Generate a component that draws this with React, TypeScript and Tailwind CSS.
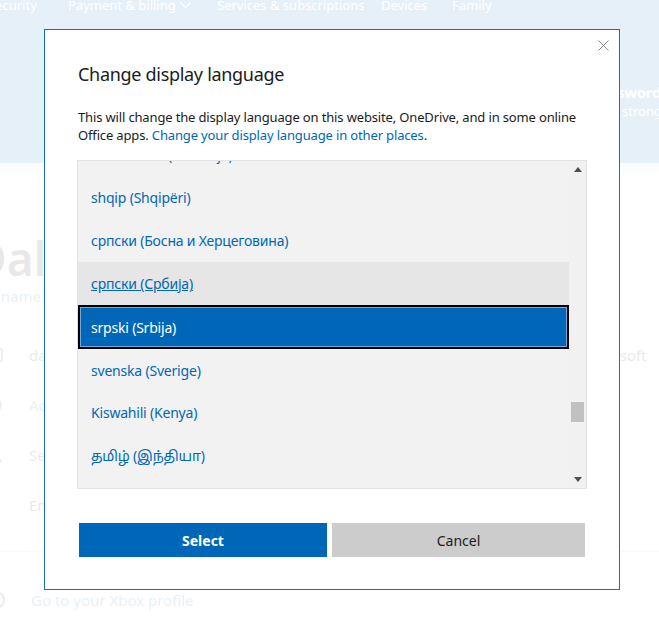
import React from "react";

const FONT = "font-['Noto_Sans','Noto_Sans_Tamil','DejaVu_Sans',sans-serif]";

function ChevronDown() {
  return (
    <svg width="11" height="7" viewBox="0 0 11 7" className="ml-[4px]" fill="none">
      <path d="M0.5 0.5 L5.5 5.5 L10.5 0.5" stroke="white" strokeWidth="1.1" />
    </svg>
  );
}

function RowIcon({ kind }: { kind: number }) {
  return (
    <svg width="20" height="20" viewBox="0 0 20 20" fill="none" className="shrink-0">
      {kind === 0 && <rect x="2" y="4" width="16" height="12" rx="1" stroke="#1b1b1b" strokeWidth="1.3" />}
      {kind === 1 && <circle cx="10" cy="10" r="7" stroke="#1b1b1b" strokeWidth="1.3" />}
      {kind === 2 && <path d="M3 17 L10 3 L17 17" stroke="#1b1b1b" strokeWidth="1.3" />}
      {kind === 3 && <path d="M4 6 H16 M4 10 H16 M4 14 H16" stroke="#1b1b1b" strokeWidth="1.3" />}
      {kind === 4 && <circle cx="10" cy="10" r="8" stroke="#1b1b1b" strokeWidth="1.6" />}
    </svg>
  );
}

function Background() {
  return (
    <div className="flex flex-col">
      <header className="h-[163px] bg-[#0067b8] flex flex-col">
        <nav className="flex -mt-[6px] h-[22px] items-center text-[13px] leading-[22px] text-white whitespace-nowrap -ml-[12px]">
          <span className="w-[80px] shrink-0">Security</span>
          <span className="w-[149px] shrink-0 flex items-center">
            Payment &amp; billing
            <ChevronDown />
          </span>
          <span className="w-[164px] shrink-0">Services &amp; subscriptions</span>
          <span className="w-[71px] shrink-0">Devices</span>
          <span className="shrink-0">Family</span>
        </nav>
        <div className="flex mt-[66px] whitespace-nowrap text-white">
          <div className="w-[592px] shrink-0" />
          <div className="flex flex-col">
            <span className="text-[15px] leading-[20px] font-bold tracking-[-0.3px]">Password</span>
            <span className="text-[13px] leading-[18px] pl-[30px]">stronger password</span>
          </div>
        </div>
      </header>
      <div className="h-[16px] bg-gradient-to-b from-[#c9def2] to-white" />
      <div className="flex flex-col -ml-[22px] whitespace-nowrap text-[#1b1b1b]">
        <div className="mt-[51px] -ml-[5px] text-[46px] leading-[56px] font-semibold">Dalibor Smith</div>
        <div className="-ml-[8px] text-[15px] leading-[20px] text-[#0067b8]">Edit name</div>
        <div className="mt-[24px] flex flex-col text-[15px]">
          {[
            { t: "dalibor.smith@outlook.com", blue: false, right: "Microsoft" },
            { t: "Account info", blue: true },
            { t: "Security settings", blue: false },
            { t: "English (United States)", blue: false },
          ].map((r, i) => (
            <div key={i} className="h-[50px] flex items-center pl-[6px]">
              <div className="w-[612px] flex items-center gap-[25px] shrink-0">
                <RowIcon kind={i} />
                <span className={r.blue ? "text-[#0067b8]" : ""}>{r.t}</span>
              </div>
              {r.right && <span className="-ml-[16px]">{r.right}</span>}
            </div>
          ))}
        </div>
      </div>
      <div className="mt-[21px] border-t border-[#1b1b1b]/20 pt-[38px] flex items-center gap-[25px] -ml-[14px] text-[15px] leading-[20px] text-[#0067b8] whitespace-nowrap">
        <RowIcon kind={4} />
        <span>Go to your Xbox profile</span>
      </div>
    </div>
  );
}

const items = [
  "slovenščina (Slovenija)",
  "shqip (Shqipëri)",
  "српски (Босна и Херцеговина)",
  "српски (Србија)",
  "srpski (Srbija)",
  "svenska (Sverige)",
  "Kiswahili (Kenya)",
  "தமிழ் (இந்தியா)",
  "తెలుగు (భారతదేశం)",
];

function LanguageList() {
  return (
    <div className="mt-[16px] h-[329px] border border-[#e3e3e3] bg-[#f2f2f2] flex overflow-hidden">
      <div className="flex-1 overflow-hidden">
        <div className="-mt-[28px] flex flex-col">
          {items.map((it, i) => {
            if (i === 4) {
              return (
                <div
                  key={i}
                  className="h-[44px] flex items-center pl-[11px] bg-[#0067b8] border-2 border-black shadow-[inset_0_0_0_1px_#6fa8dc] text-white text-[14px] tracking-[-0.2px]"
                >
                  {it}
                </div>
              );
            }
            const hover = i === 3;
            return (
              <div
                key={i}
                className={`${i === 5 ? "h-[42px]" : "h-[43px]"} flex items-center pl-[13px] text-[14px] tracking-[-0.2px] text-[#0067b8] ${hover ? "bg-[#e6e6e6] underline" : ""}`}
              >
                {it}
              </div>
            );
          })}
        </div>
      </div>
      <div className="w-[17px] flex flex-col bg-[#f1f1f1]">
        <div className="h-[17px] flex items-center justify-center">
          <svg width="8" height="5" viewBox="0 0 8 5">
            <path d="M0 5 L4 0 L8 5 Z" fill="#505050" />
          </svg>
        </div>
        <div className="flex-1 flex flex-col">
          <div className="mt-[224px] h-[20px] mx-[2px] bg-[#c1c1c1]" />
        </div>
        <div className="h-[17px] flex items-center justify-center">
          <svg width="8" height="5" viewBox="0 0 8 5">
            <path d="M0 0 L8 0 L4 5 Z" fill="#505050" />
          </svg>
        </div>
      </div>
    </div>
  );
}

export default function App() {
  return (
    <div className={`relative w-[659px] h-[625px] overflow-hidden bg-white ${FONT}`}>
      <Background />
      <div className="absolute inset-0 bg-white/90" />
      <div className="absolute left-[44px] top-[29px] w-[576px] h-[561px] bg-white border border-[#1a6ec0] px-[32px] pt-[30px] flex flex-col">
        <button className="absolute top-[10px] right-[10px] w-[11px] h-[11px]" aria-label="Close">
          <svg width="11" height="11" viewBox="0 0 11 11">
            <path d="M0.5 0.5 L10.5 10.5 M10.5 0.5 L0.5 10.5" stroke="#8a8a8a" strokeWidth="1" />
          </svg>
        </button>
        <h2 className="text-[18px] leading-[28px] tracking-[-0.3px] text-[#1b1b1b] pl-[1px]">Change display language</h2>
        <p className="mt-[20px] text-[13px] leading-[18px] tracking-[-0.15px] text-[#1b1b1b] pl-[1px]">
          This will change the display language on this website, OneDrive, and in some online Office apps.{" "}
          <a className="text-[#0067b8]">Change your display language in other places</a>.
        </p>
        <LanguageList />
        <div className="mt-[34px] flex gap-[5px] pl-[2px]">
          <button className="w-[248px] h-[34px] bg-[#0067b8] text-white text-[14px] font-bold">Select</button>
          <button className="w-[253px] h-[34px] bg-[#cccccc] text-[#1b1b1b] text-[14px]">Cancel</button>
        </div>
      </div>
    </div>
  );
}
